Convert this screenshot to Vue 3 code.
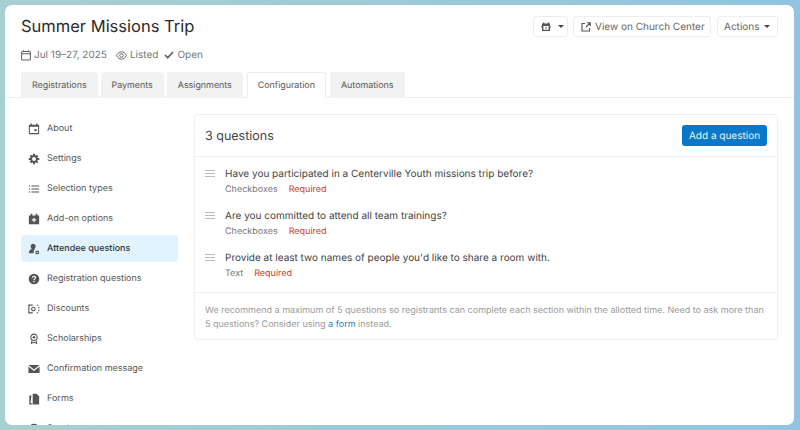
<script setup>
const tabs = ['Registrations', 'Payments', 'Assignments', 'Configuration', 'Automations']
const nav = [
  { label: 'About', icon: 'about' },
  { label: 'Settings', icon: 'settings' },
  { label: 'Selection types', icon: 'list' },
  { label: 'Add-on options', icon: 'addon' },
  { label: 'Attendee questions', icon: 'attendee', active: true },
  { label: 'Registration questions', icon: 'help' },
  { label: 'Discounts', icon: 'discount' },
  { label: 'Scholarships', icon: 'award' },
  { label: 'Confirmation message', icon: 'mail' },
  { label: 'Forms', icon: 'forms' },
  { label: 'Sendouts', icon: 'help' }
]
const questions = [
  { text: 'Have you participated in a Centerville Youth missions trip before?', type: 'Checkboxes' },
  { text: 'Are you committed to attend all team trainings?', type: 'Checkboxes' },
  { text: "Provide at least two names of people you'd like to share a room with.", type: 'Text' }
]
</script>

<template>
  <div class="frame">
    <div class="window">
      <header class="head">
        <div class="title-row">
          <h1>Summer Missions Trip</h1>
          <div class="actions">
            <button class="btn cal">
              <svg width="10" height="10" viewBox="0 0 10 10"><path fill="#555" fill-rule="evenodd" d="M2 .5h1.300v1h3.400v-1H8v1h1v2.700h.7v1.300H9V9H1V5.500H.3V4.200H1V1.500h1zM2.400 4v3.700h5.200V4z"/><rect x="4.200" y="5" width="1.600" height="1.600" fill="#888"/></svg>
              <i class="caret cal-caret"></i>
            </button>
            <button class="btn ext">
              <svg width="10" height="10" viewBox="0 0 10 10" fill="none" stroke="#555" stroke-width="1.100"><path d="M4 1.500H1v7.500h7.500V6"/><path d="M5 5l4-4M6 .7h3.300V4"/></svg>
              <span class="view">View on Church Center</span>
            </button>
            <button class="btn act">Actions<i class="caret"></i></button>
          </div>
        </div>
        <div class="meta">
          <span class="meta-item first">
            <svg width="10" height="11" viewBox="0 0 10 11" fill="none" stroke="#666" stroke-width="1.100"><rect x=".6" y="1.500" width="8.800" height="8.500" rx="1"/><path d="M.6 3.800h8.800M2.500 .3v1.500M7.500 .3v1.500"/></svg>
            Jul 19–27, 2025
          </span>
          <span class="meta-item">
            <svg width="11" height="9" viewBox="0 0 11 9" fill="none" stroke="#666"><path d="M.5 4.500C2 1.800 3.700.8 5.500.8s3.500 1 5 3.700c-1.500 2.700-3.200 3.700-5 3.700S2 7.200.5 4.500z"/><circle cx="5.500" cy="4.500" r="1.800"/></svg>
            Listed
          </span>
          <span class="meta-item">
            <svg width="10" height="8" viewBox="0 0 10 8" fill="none" stroke="#666" stroke-width="1.700"><path d="M1 4l2.700 2.700L9 1"/></svg>
            Open
          </span>
        </div>
        <nav class="tabs">
          <a v-for="t in tabs" :key="t" class="tab" :class="{ on: t === 'Configuration' }">{{ t }}</a>
        </nav>
      </header>

      <div class="body">
        <aside class="side">
          <a v-for="n in nav" :key="n.label" class="nav" :class="{ active: n.active }">
            <span class="ico">
              <svg width="14" height="14" viewBox="0 0 14 14" fill="#555">
                <template v-if="n.icon === 'about'">
                  <path fill-rule="evenodd" d="M3 .5h1.500v1.500h5V.5H11v1.500h2V13H1V2h2zM2.200 4.500V11.800h9.600V4.500z"/><rect x="7.500" y="7" width="2.500" height="2.500"/>
                </template>
                <template v-else-if="n.icon === 'settings'">
                  <circle cx="7" cy="7" r="3.300" fill="none" stroke="#555" stroke-width="2"/>
                  <path d="M5.800.8h2.400v2.700H5.800zM5.800 10.500h2.400v2.700H5.800zM.8 5.800h2.700v2.400H.8zM10.500 5.800h2.700v2.400h-2.700zM1.900 3.600 3.600 1.900l2 2-1.700 1.700zM8.400 10.100l1.700-1.700 2 2-1.700 1.700zM1.900 10.400l2-2 1.700 1.700-2 2zM8.400 3.900l2-2 1.700 1.700-2 2z"/>
                </template>
                <template v-else-if="n.icon === 'list'">
                  <path d="M1 3h1.500v1.200H1zM4 3h9v1.200H4zM1 6.400h1.500v1.200H1zM4 6.400h9v1.200H4zM1 9.800h1.500V11H1zM4 9.800h9V11H4z"/>
                </template>
                <template v-else-if="n.icon === 'addon'">
                  <path fill-rule="evenodd" d="M3 1h2v1.800h4V1h2v1.800h2V13H1V2.800h2zM6.300 5.500v1.900H4.500v1.300h1.800v1.800h1.400V8.700h1.800V7.400H7.700V5.500z"/>
                </template>
                <template v-else-if="n.icon === 'attendee'">
                  <path d="M6 .8c1.700 0 2.900 1.300 2.900 3.100 0 1.300-.5 2.300-1.200 2.900v1.100c-1 .7-1.300 2-1.100 4.100H1c0-2.800 1.300-4.200 3.300-5V6.800c-.7-.6-1.200-1.600-1.200-2.900C3.100 2.100 4.300.8 6 .8z"/><path fill-rule="evenodd" d="M10.800 8.800a2.200 2.200 0 1 1 0 4.400 2.200 2.200 0 0 1 0-4.400zm0 1.400a.8.800 0 1 0 0 1.600.8.800 0 0 0 0-1.600z"/>
                </template>
                <template v-else-if="n.icon === 'help'">
                  <path fill-rule="evenodd" d="M7 .8a6.200 6.200 0 1 1 0 12.400A6.200 6.200 0 0 1 7 .8zM6.300 9.300v1.400h1.400V9.300zM7 3.300c-1.500 0-2.400.9-2.500 2.200h1.400c0-.6.400-1 1.100-1 .6 0 1 .4 1 .9 0 1-1.700 1.100-1.700 3h1.400c0-1.300 1.700-1.500 1.700-3.100 0-1.200-1-2-2.400-2z"/>
                </template>
                <template v-else-if="n.icon === 'discount'">
                  <path fill="none" stroke="#555" stroke-width="1.300" d="M5.500 2.500H1v9h4.500"/><circle cx="6.300" cy="7" r="2.100" fill="none" stroke="#555" stroke-width="1.200"/>
                  <path d="M10.300 2h1.700v1.300h-1.700zM12 4.500h1.300v1.800H12zM12 7.800h1.300v1.800H12zM10.300 10.700h1.700V12h-1.700z"/>
                </template>
                <template v-else-if="n.icon === 'award'">
                  <circle cx="7" cy="5" r="3.700" fill="none" stroke="#555" stroke-width="1.300"/><circle cx="7" cy="5" r="1.500"/><path d="M4 8.500l-.8 4.500L7 11.500l3.800 1.500L10 8.500 8.800 9.300 9.300 11 7 10.200 4.700 11l.5-1.700z"/>
                </template>
                <template v-else-if="n.icon === 'mail'">
                  <path d="M.5 2.200h13L7 7.500zM.5 4v7.800h13V4L7 9.300z"/>
                </template>
                <template v-else>
                  <path d="M5.500 1h4.500l3 3v9.300H5.500z"/><path d="M4 3H1.500v10.300H5v-1.300H3z"/>
                </template>
              </svg>
            </span>
            {{ n.label }}
          </a>
        </aside>

        <main class="card">
          <div class="card-head">
            <h2>3 questions</h2>
            <button class="primary">Add a question</button>
          </div>
          <div class="list">
            <div v-for="q in questions" :key="q.text" class="q">
              <span class="drag"><i></i><i></i><i></i></span>
              <div>
                <div class="q-text">{{ q.text }}</div>
                <div class="q-meta"><span>{{ q.type }}</span><span class="req">Required</span></div>
              </div>
            </div>
          </div>
          <p class="note">We recommend a maximum of 5 questions so registrants can complete each section within the allotted time. Need to ask more than 5 questions? Consider using <a>a form</a> instead.</p>
        </main>
      </div>
    </div>
  </div>
</template>

<style>
html, body { margin: 0; }
</style>

<style scoped>
.frame {
  width: 800px;
  height: 430px;
  box-sizing: border-box;
  padding: 5px 6px 5px 5px;
  background: linear-gradient(90deg, #a7d0d0, #90c4e1);
  font-family: Inter, "Liberation Sans", sans-serif;
  text-rendering: geometricPrecision;
  color: #444;
}
.window {
  height: 420px;
  background: #fff;
  border-radius: 7px;
  overflow: hidden;
}
.head {
  padding: 0 16px;
  border-bottom: 1px solid #eee;
}
.title-row {
  display: flex;
  justify-content: space-between;
  align-items: center;
  padding-top: 11px;
}
h1 {
  margin: 0;
  font-size: 16.500px;
  line-height: 21px;
  font-weight: 400;
  color: #2b2b2b;
}
.actions {
  display: flex;
  gap: 5px;
}
.btn {
  display: flex;
  align-items: center;
  height: 21px;
  box-sizing: border-box;
  padding: 0 7px;
  background: #fff;
  border: 1px solid #eee;
  border-radius: 3px;
  font: 10px Inter, "Liberation Sans", sans-serif;
  text-rendering: geometricPrecision;
  color: #666;
  white-space: nowrap;
}
.btn svg { flex: none; }
.cal { width: 35px; padding-right: 0; }
.ext { width: 138px; padding-right: 0; }
.act { width: 61px; margin-left: 1px; padding-left: 6px; }
.view { margin-left: 4px; }
.caret {
  flex: none;
  width: 0;
  height: 0;
  margin-left: 4px;
  border: 3px solid transparent;
  border-top-color: #444;
  border-bottom: 0;
}
.cal-caret { margin-left: 7px; }
.meta {
  display: flex;
  gap: 6px;
  margin-top: 11px;
  font-size: 10px;
  line-height: 14px;
  color: #777;
}
.meta-item {
  display: flex;
  align-items: center;
  gap: 3px;
}
.first { margin-right: 3px; }
.tabs {
  display: flex;
  gap: 3px;
  margin-top: 10px;
  margin-bottom: -1px;
}
.tab {
  height: 26px;
  box-sizing: border-box;
  padding: 0 11px;
  display: flex;
  align-items: center;
  background: #f2f2f2;
  border-radius: 3px 3px 0 0;
  font-size: 8.900px;
  color: #555;
}
.tab.on {
  padding: 0 10px;
  margin: 0 1px;
  background: #fff;
  border: 1px solid #eee;
  border-bottom-color: #fff;
}
.body {
  display: flex;
  gap: 16px;
  padding: 16px 16px 0;
  align-items: flex-start;
}
.side {
  width: 157px;
  flex: none;
  margin-top: 1px;
}
.nav {
  display: flex;
  align-items: center;
  height: 27px;
  margin-bottom: 3px;
  padding-left: 7px;
  border-radius: 3px;
  font-size: 9px;
  color: #555;
}
.nav.active {
  background: #e1f3fe;
  color: #333;
  font-weight: 500;
}
.ico {
  width: 12px;
  height: 14px;
  margin-right: 7px;
  display: flex;
  justify-content: center;
}
.card {
  flex: 1;
  border: 1px solid #f0f0f0;
  border-radius: 3px;
}
.card-head {
  height: 42px;
  box-sizing: border-box;
  padding: 0 10px;
  display: flex;
  align-items: center;
  justify-content: space-between;
  border-bottom: 1px solid #f0f0f0;
}
h2 {
  margin: 1px 0 0;
  font-size: 12.500px;
  font-weight: 400;
  color: #444;
}
.primary {
  width: 85px;
  height: 21px;
  padding: 0;
  border: 0;
  border-radius: 3px;
  background: #0a78c8;
  color: #e8f3fb;
  font: 10px Inter, "Liberation Sans", sans-serif;
  text-rendering: geometricPrecision;
}
.list {
  padding: 10px 10px 0;
  border-bottom: 1px solid #f0f0f0;
}
.q {
  display: flex;
  height: 42px;
}
.q:last-child { height: 41px; }
.drag {
  width: 10px;
  margin: 3px 10px 0 0;
}
.drag i {
  display: block;
  height: 1px;
  margin-bottom: 2px;
  background: #bbb;
}
.q-text {
  font-size: 10px;
  line-height: 15px;
  color: #444;
}
.q-meta {
  display: flex;
  gap: 11px;
  font-size: 9px;
  line-height: 16px;
  color: #777;
}
.req { color: #c8402c; }
.note {
  margin: 0;
  padding: 11px 10px 7px;
  font-size: 9px;
  line-height: 14px;
  color: #9a9a9a;
}
.note a { color: #1d7fcb; }
</style>
